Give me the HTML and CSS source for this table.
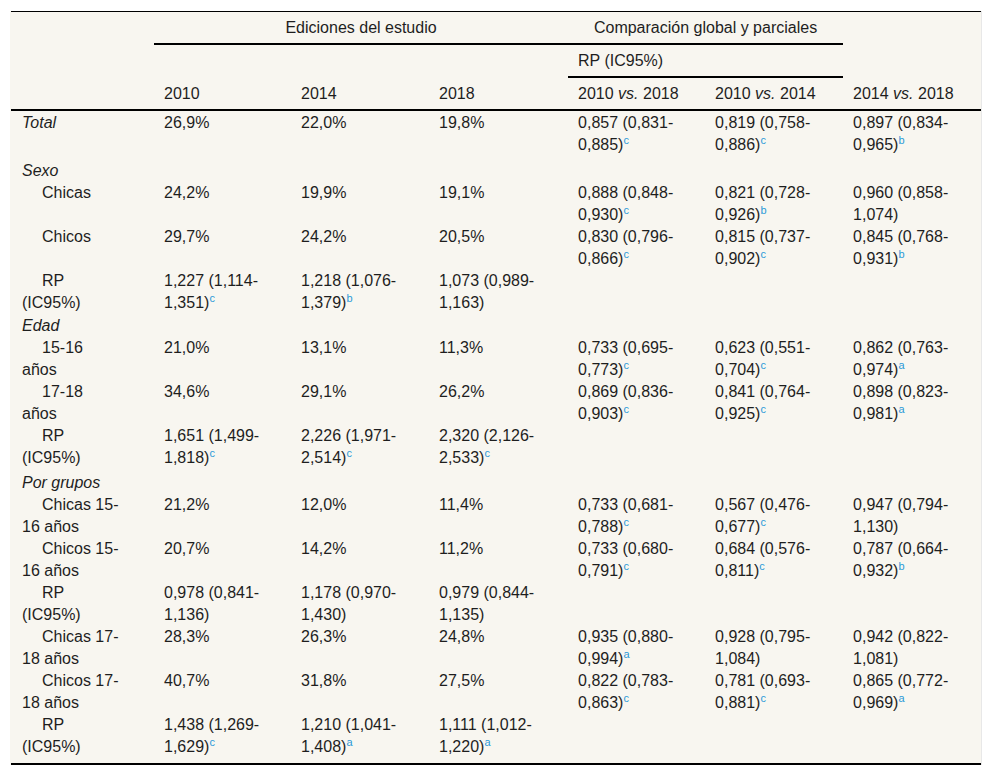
FILE: index.html
```html
<!DOCTYPE html>
<html lang="es">
<head>
<meta charset="utf-8">
<title>Tabla</title>
<link rel="stylesheet" href="styles.css">
</head>
<body>
<div class="wrap">
<table class="t">
<colgroup>
<col class="c1"><col class="c137"><col class="c138"><col class="c139"><col class="c137"><col class="c138"><col class="c138">
</colgroup>
<thead>
<tr>
<th></th>
<th colspan="3" class="grp ctr">Ediciones del estudio</th>
<th colspan="2" class="grp ctr">Comparación global y parciales</th>
<th></th>
</tr>
<tr>
<th></th><th></th><th></th><th></th>
<th colspan="2" class="grp">RP (IC95%)</th>
<th></th>
</tr>
<tr class="last">
<th></th>
<th>2010</th>
<th>2014</th>
<th>2018</th>
<th>2010 <i>vs.</i> 2018</th>
<th>2010 <i>vs.</i> 2014</th>
<th>2014 <i>vs.</i> 2018</th>
</tr>
</thead>
<tbody>
<tr>
<td class="sec">Total</td><td>26,9%</td><td>22,0%</td><td>19,8%</td>
<td>0,857 (0,831-0,885)<sup>c</sup></td><td>0,819 (0,758-0,886)<sup>c</sup></td><td>0,897 (0,834-0,965)<sup>b</sup></td>
</tr>
<tr class="head head-sexo">
<td class="sec">Sexo</td><td></td><td></td><td></td><td></td><td></td><td></td>
</tr>
<tr>
<td class="ind">Chicas</td><td>24,2%</td><td>19,9%</td><td>19,1%</td>
<td>0,888 (0,848-0,930)<sup>c</sup></td><td>0,821 (0,728-0,926)<sup>b</sup></td><td>0,960 (0,858-1,074)</td>
</tr>
<tr>
<td class="ind">Chicos</td><td>29,7%</td><td>24,2%</td><td>20,5%</td>
<td>0,830 (0,796-0,866)<sup>c</sup></td><td>0,815 (0,737-0,902)<sup>c</sup></td><td>0,845 (0,768-0,931)<sup>b</sup></td>
</tr>
<tr>
<td class="ind">RP (IC95%)</td><td>1,227 (1,114-1,351)<sup>c</sup></td><td>1,218 (1,076-1,379)<sup>b</sup></td><td>1,073 (0,989-1,163)</td>
<td></td><td></td><td></td>
</tr>
<tr class="head head-edad">
<td class="sec">Edad</td><td></td><td></td><td></td><td></td><td></td><td></td>
</tr>
<tr>
<td class="ind">15-16 años</td><td>21,0%</td><td>13,1%</td><td>11,3%</td>
<td>0,733 (0,695-0,773)<sup>c</sup></td><td>0,623 (0,551-0,704)<sup>c</sup></td><td>0,862 (0,763-0,974)<sup>a</sup></td>
</tr>
<tr>
<td class="ind">17-18 años</td><td>34,6%</td><td>29,1%</td><td>26,2%</td>
<td>0,869 (0,836-0,903)<sup>c</sup></td><td>0,841 (0,764-0,925)<sup>c</sup></td><td>0,898 (0,823-0,981)<sup>a</sup></td>
</tr>
<tr>
<td class="ind">RP (IC95%)</td><td>1,651 (1,499-1,818)<sup>c</sup></td><td>2,226 (1,971-2,514)<sup>c</sup></td><td>2,320 (2,126-2,533)<sup>c</sup></td>
<td></td><td></td><td></td>
</tr>
<tr class="head">
<td class="sec">Por grupos</td><td></td><td></td><td></td><td></td><td></td><td></td>
</tr>
<tr>
<td class="ind">Chicas 15-16 años</td><td>21,2%</td><td>12,0%</td><td>11,4%</td>
<td>0,733 (0,681-0,788)<sup>c</sup></td><td>0,567 (0,476-0,677)<sup>c</sup></td><td>0,947 (0,794-1,130)</td>
</tr>
<tr>
<td class="ind">Chicos 15-16 años</td><td>20,7%</td><td>14,2%</td><td>11,2%</td>
<td>0,733 (0,680-0,791)<sup>c</sup></td><td>0,684 (0,576-0,811)<sup>c</sup></td><td>0,787 (0,664-0,932)<sup>b</sup></td>
</tr>
<tr>
<td class="ind">RP (IC95%)</td><td>0,978 (0,841-1,136)</td><td>1,178 (0,970-1,430)</td><td>0,979 (0,844-1,135)</td>
<td></td><td></td><td></td>
</tr>
<tr>
<td class="ind">Chicas 17-18 años</td><td>28,3%</td><td>26,3%</td><td>24,8%</td>
<td>0,935 (0,880-0,994)<sup>a</sup></td><td>0,928 (0,795-1,084)</td><td>0,942 (0,822-1,081)</td>
</tr>
<tr>
<td class="ind">Chicos 17-18 años</td><td>40,7%</td><td>31,8%</td><td>27,5%</td>
<td>0,822 (0,783-0,863)<sup>c</sup></td><td>0,781 (0,693-0,881)<sup>c</sup></td><td>0,865 (0,772-0,969)<sup>a</sup></td>
</tr>
<tr class="end">
<td class="ind">RP (IC95%)</td><td>1,438 (1,269-1,629)<sup>c</sup></td><td>1,210 (1,041-1,408)<sup>a</sup></td><td>1,111 (1,012-1,220)<sup>a</sup></td>
<td></td><td></td><td></td>
</tr>
</tbody>
</table>
</div>
</body>
</html>
```

FILE: styles.css
```css
html, body {
  margin: 0;
  padding: 0;
  background: #ffffff;
}

body {
  font-family: "Liberation Sans", Arial, Helvetica, sans-serif;
  font-size: 16px;
  color: #1e1e1e;
}

.wrap {
  margin: 11px 0 0 10px;
  width: 972px;
  box-sizing: border-box;
  padding-left: 1px;
  background: #f8f6f0;
  border-right: 1px solid #e8e8e8;
}

.t {
  width: 970px;
  table-layout: fixed;
  border-collapse: separate;
  border-spacing: 0;
  border-top: 1px solid #000000;
  border-bottom: 2px solid #000000;
  background: #f8f6f0;
}

.c1 { width: 143px; }
.c137 { width: 137px; }
.c138 { width: 138px; }
.c139 { width: 139px; }

.t th {
  font-weight: normal;
  text-align: left;
  vertical-align: top;
  line-height: 22px;
  padding: 5px 10px 4px 10px;
}

.t th.ctr {
  text-align: center;
}

.t th.grp {
  border-bottom: 2px solid #000000;
}

.t tr.last th {
  border-bottom: 2px solid #000000;
}

.t td {
  vertical-align: top;
  line-height: 22px;
  padding: 0 22px 0 10px;
}

.t td:first-child {
  padding: 0 34px 0 11px;
}

.t td.sec {
  font-style: italic;
}

.t td.ind {
  text-indent: 20px;
}

.t tr:first-child td {
  padding-top: 1px;
}

.t tr.head td {
  padding-top: 3px;
}

.t tr.head-sexo td {
  padding-top: 4px;
}

.t tr.head-edad td {
  padding-top: 1px;
}

.t tr.end td {
  padding-bottom: 5px;
}

.t sup {
  font-size: 11px;
  line-height: 0;
  vertical-align: super;
  color: #2b9ad8;
}
```
